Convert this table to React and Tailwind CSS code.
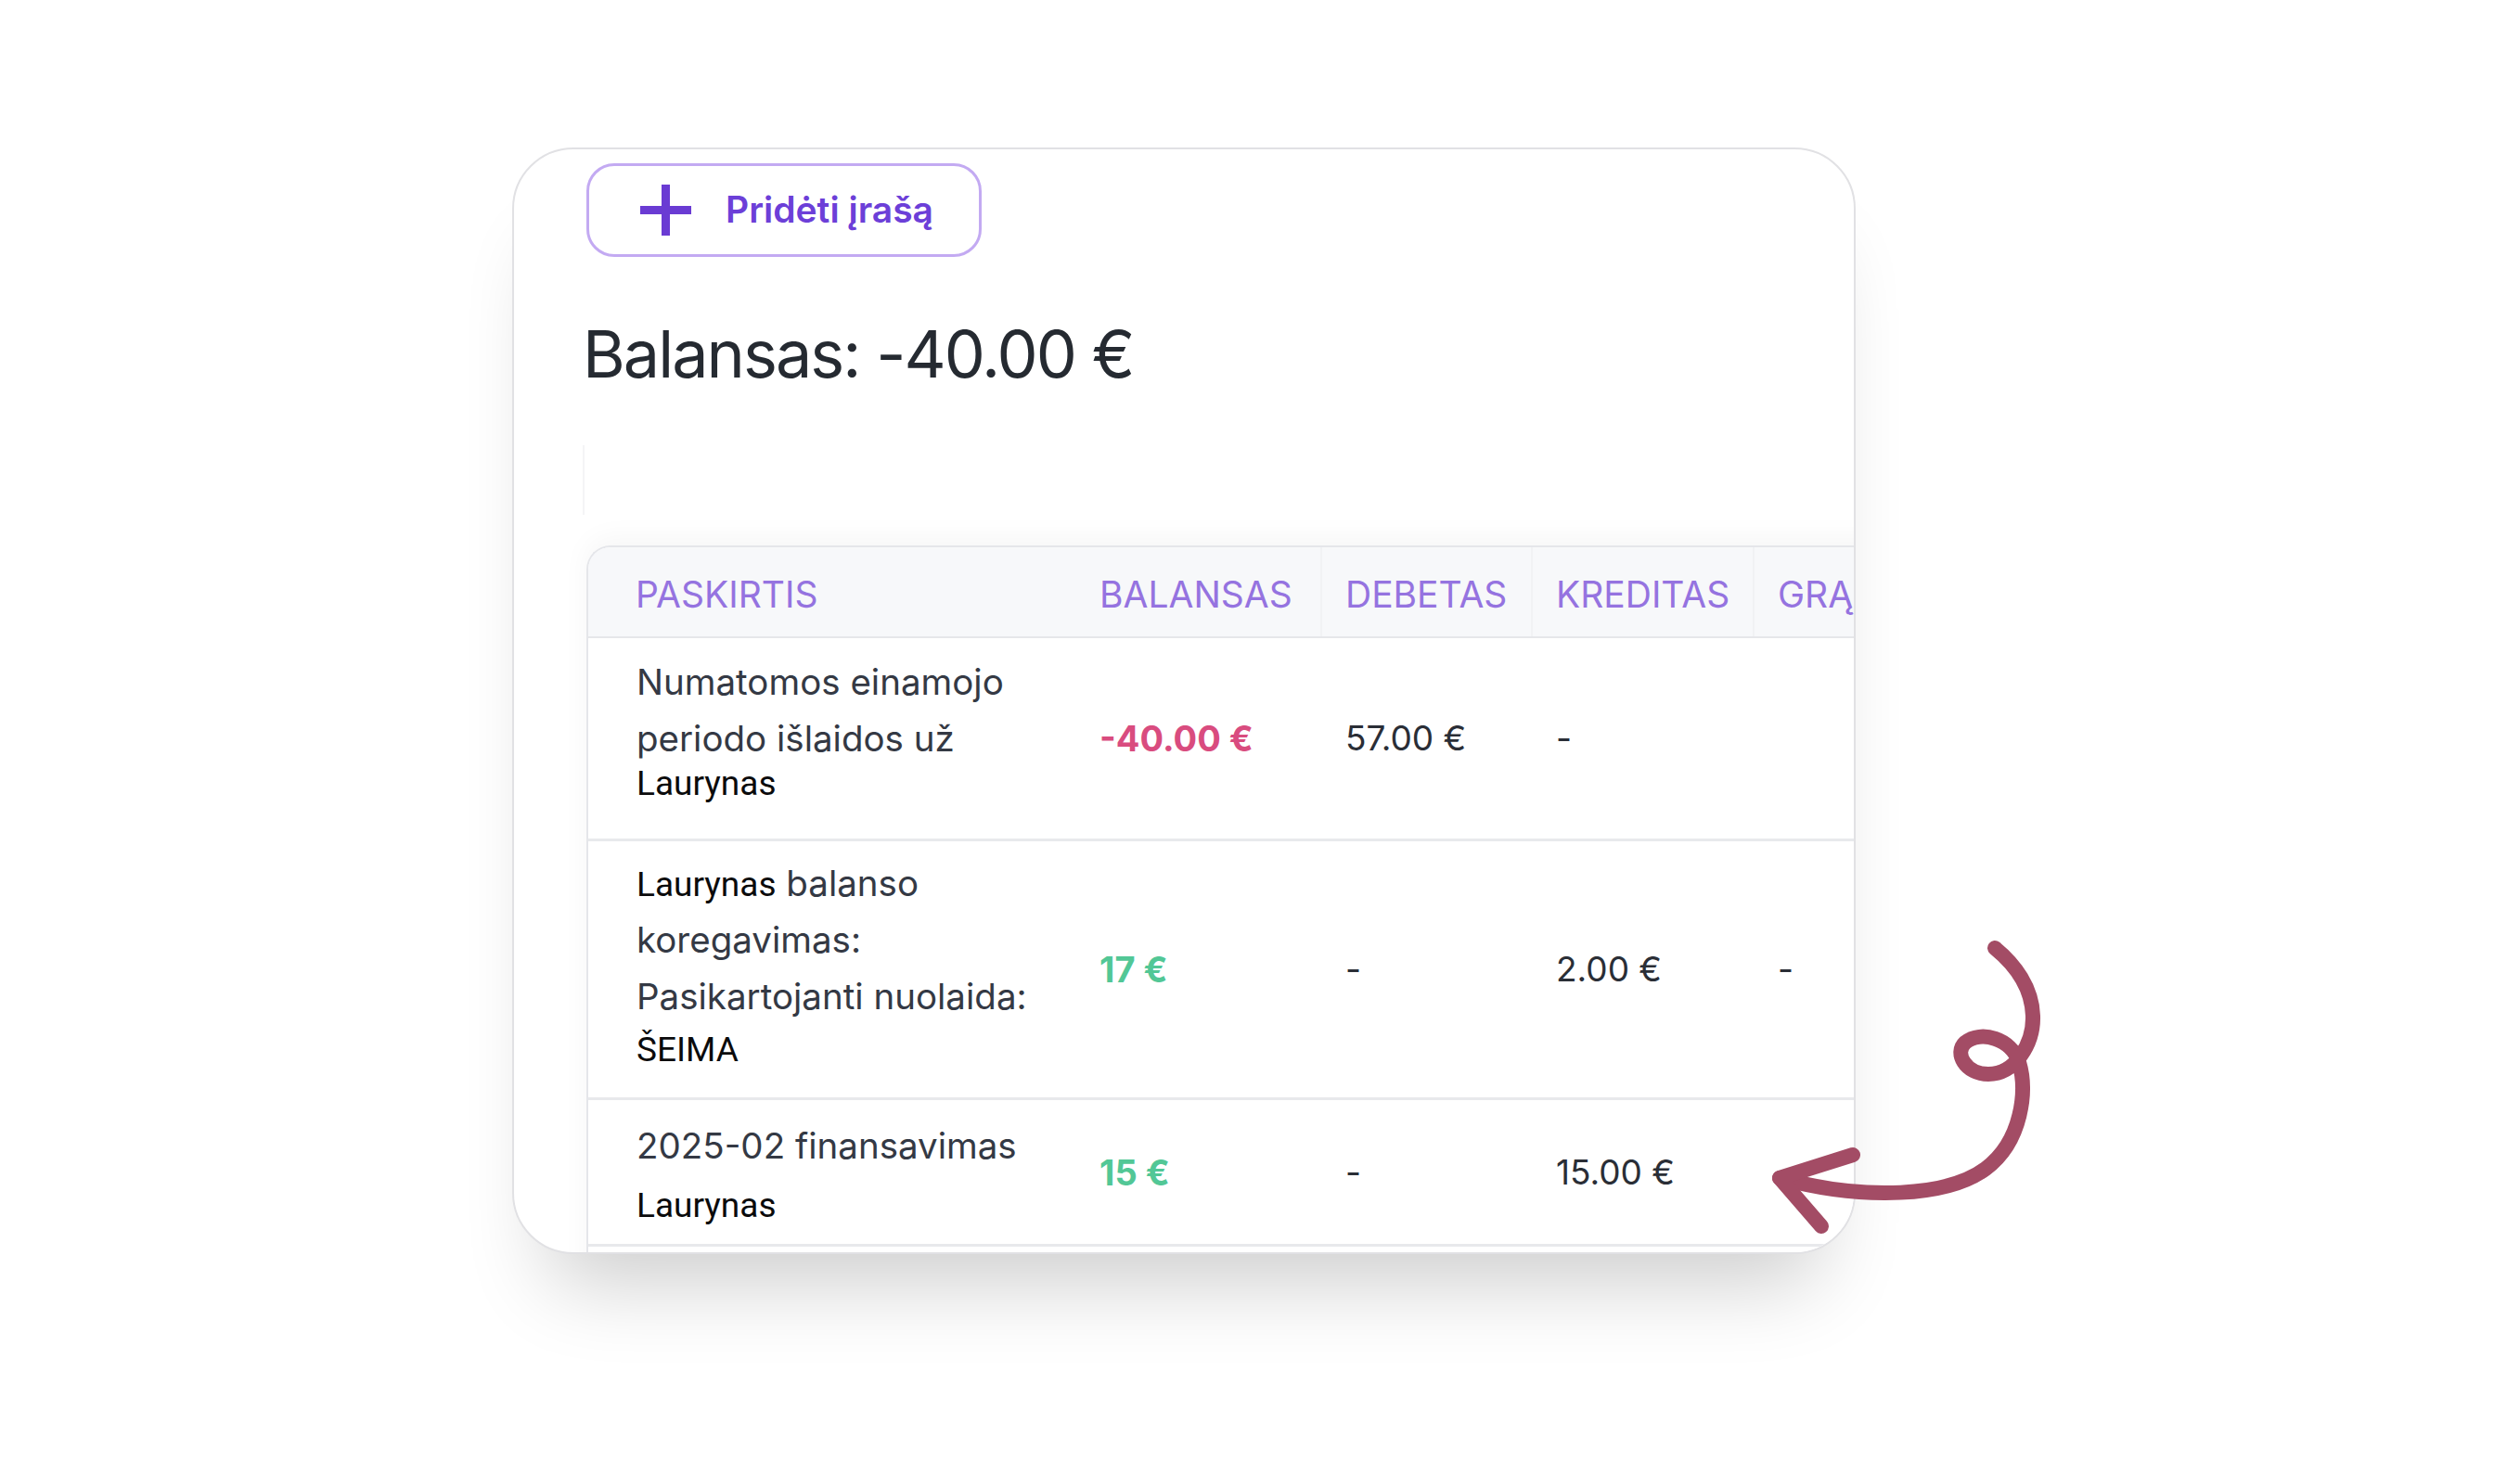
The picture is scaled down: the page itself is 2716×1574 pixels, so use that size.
const grid = "grid grid-cols-[524px_265px_227px_239px_260px]";

function Plus() {
  return (
    <svg width="57" height="57" viewBox="0 0 57 57" className="shrink-0">
      <path d="M28.5 1v55M1 28.5h55" stroke="#6a3bd3" strokeWidth="9" fill="none" />
    </svg>
  );
}

function Arrow() {
  return (
    <svg
      className="pointer-events-none absolute left-0 top-0"
      width="2716"
      height="1574"
      viewBox="0 0 2716 1574"
    >
      <g fill="none" stroke="#a34c65" strokeWidth="16" strokeLinecap="round" strokeLinejoin="round">
        <path d="M2150 1022 C2172 1040 2190 1065 2191 1095 C2192 1125 2172 1158 2143 1158 C2118 1158 2106 1135 2118 1124 C2135 1110 2168 1120 2176 1145 C2185 1175 2180 1230 2140 1260 C2100 1290 2010 1295 1918 1270" />
        <path d="M1997 1245 L1918 1270 L1963 1322" />
      </g>
    </svg>
  );
}

const desc = "text-[38.5px] leading-[61px] text-[#343944]";
const name = "font-['Roboto',sans-serif] text-[37px] leading-[36px] text-[#0b0b0c]";
const val = "flex items-center pl-[27px] text-[37px] leading-[48px] text-[#2a2e36]";
const head = "pt-[27px] text-[39px] leading-[48px] text-[#9573e0]";

export default function App() {
  return (
    <div className="relative h-[1574px] w-[2716px] overflow-hidden bg-white font-['Inter',sans-serif]">
      <div className="pl-[552px] pt-[159px]">
        <div className="h-[1193px] w-[1448px] overflow-hidden rounded-[66px] border-2 border-[#e1e1e4] bg-white pl-[78px] pt-[15px] shadow-[0_70px_90px_-40px_rgba(0,0,0,0.2)]">
          <button className="flex h-[101px] w-[426px] items-center rounded-[30px] border-[3px] border-[#c3aaf2] bg-white pl-[54px]">
            <Plus />
            <span className="ml-[36px] text-[39px] font-semibold text-[#6c3fd8]">Pridėti įrašą</span>
          </button>

          <h1 className="-ml-1 mt-[70px] text-[70px] font-normal leading-[70px] tracking-[-0.028em] text-[#252a31]">
            Balansas: -40.00 €
          </h1>

          <div className="-ml-[4px] mt-[63px] h-[75px] w-[2px] bg-[#f4f4f6]" />

          <div className="mt-[33px] w-[1517px] shrink-0 overflow-hidden rounded-tl-[26px] border-l-2 border-t-2 border-[#e5e6ea] bg-white shadow-[0_-8px_30px_rgba(0,0,0,0.04)]">
            <div className={`${grid} h-[98px] border-b-2 border-[#e6e7ea] bg-[#f7f8fa]`}>
              <div className={`${head} pl-[51px]`}>PASKIRTIS</div>
              <div className={`${head} pl-[27px]`}>BALANSAS</div>
              <div className={`${head} border-l-2 border-[#f1f2f4] pl-[25px]`}>DEBETAS</div>
              <div className={`${head} border-l-2 border-[#f1f2f4] pl-[25px]`}>KREDITAS</div>
              <div className={`${head} border-l-2 border-[#f1f2f4] pl-[25px]`}>GRĄŽINIMAS</div>
            </div>

            <div className={`${grid} border-b-[3px] border-[#e8e9ec]`}>
              <div className="pb-[41px] pl-[52px] pr-[26px] pt-[17px]">
                <div className={desc}>Numatomos einamojo periodo išlaidos už</div>
                <div className={name}>Laurynas</div>
              </div>
              <div className={`${val} text-[38px] font-bold text-[#d94c7f]`}>-40.00 €</div>
              <div className={val}>57.00 €</div>
              <div className={val}>-</div>
              <div className={val}></div>
            </div>

            <div className={`${grid} border-b-[3px] border-[#e8e9ec]`}>
              <div className="pb-[33px] pl-[52px] pr-[26px] pt-[15px]">
                <div className={desc}>
                  <span className="font-['Roboto',sans-serif] text-[37px] leading-[36px] text-[#0b0b0c]">Laurynas</span>{" "}
                  balanso koregavimas: Pasikartojanti nuolaida:
                </div>
                <div className={`${name} mt-[9px]`}>ŠEIMA</div>
              </div>
              <div className={`${val} text-[38px] font-bold text-[#52c796]`}>17 €</div>
              <div className={val}>-</div>
              <div className={val}>2.00 €</div>
              <div className={val}>-</div>
            </div>

            <div className={`${grid} border-b-[3px] border-[#e8e9ec]`}>
              <div className="pb-[23px] pl-[52px] pr-[26px] pt-[19px]">
                <div className={desc}>2025-02 finansavimas</div>
                <div className={`${name} mt-[16px]`}>Laurynas</div>
              </div>
              <div className={`${val} text-[38px] font-bold text-[#52c796]`}>15 €</div>
              <div className={val}>-</div>
              <div className={val}>15.00 €</div>
              <div className={val}></div>
            </div>

            <div className={`${grid} h-[160px]`}>
              <div />
              <div />
              <div />
              <div />
              <div />
            </div>
          </div>
        </div>
      </div>
      <Arrow />
    </div>
  );
}
